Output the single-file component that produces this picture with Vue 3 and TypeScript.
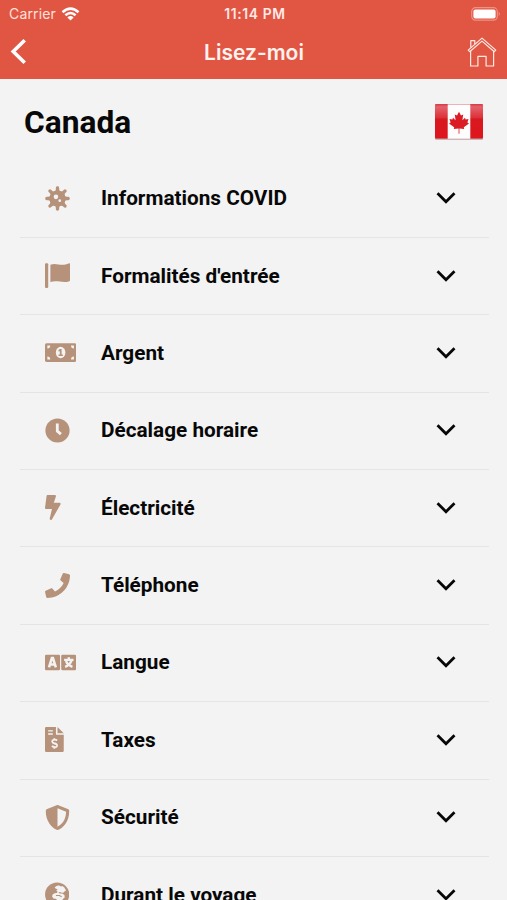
<script setup lang="ts">
interface Section {
  id: string
  label: string
  width: number
}

const sections: Section[] = [
  { id: 'covid', label: 'Informations COVID', width: 512 },
  { id: 'flag', label: "Formalités d'entrée", width: 512 },
  { id: 'money', label: 'Argent', width: 640 },
  { id: 'clock', label: 'Décalage horaire', width: 512 },
  { id: 'bolt', label: 'Électricité', width: 320 },
  { id: 'phone', label: 'Téléphone', width: 512 },
  { id: 'language', label: 'Langue', width: 640 },
  { id: 'invoice', label: 'Taxes', width: 384 },
  { id: 'shield', label: 'Sécurité', width: 512 },
  { id: 'globe', label: 'Durant le voyage', width: 496 },
]

const spikes: number[] = [0, 45, 90, 135, 180, 225, 270, 315]
</script>

<template>
  <div class="screen">
    <header class="top">
      <div class="status">
        <div class="carrier">
          <span>Carrier</span>
          <svg class="wifi" viewBox="0 0 18 14" fill="none" stroke="#fff" stroke-width="2.5">
            <path d="M1 5.2Q9-2 17 5.2" />
            <path d="M3.9 8.3Q9 3.8 14.1 8.3" />
            <path d="M9 13.6 5.9 10.4Q9 7.8 12.1 10.4Z" fill="#fff" stroke="none" />
          </svg>
        </div>
        <span class="time">11:14 PM</span>
        <svg class="battery" viewBox="0 0 30 14">
          <rect x=".7" y=".7" width="25.6" height="12.4" rx="3.8" fill="none" stroke="#ee9284" stroke-width="1.2" />
          <rect x="2.4" y="2.4" width="22.2" height="9" rx="2" fill="#fff" />
          <path d="M27.7 4.8Q30 6.9 27.7 9Z" fill="#ee9284" />
        </svg>
      </div>
      <nav class="nav">
        <svg class="back" viewBox="0 0 18 28" fill="none" stroke="#fff" stroke-width="3.6">
          <path d="M14.700 2.200 3.200 13.500 14.700 24.800" />
        </svg>
        <h1>Lisez-moi</h1>
        <svg class="home" viewBox="0 0 30 32" fill="none" stroke="#ffe9e5" stroke-width="1.2" stroke-linejoin="round">
          <path d="M1.200 14.100 15 2.100 28.800 14.100 27.300 15.700 15 5.100 2.700 15.700Z" />
          <path d="M3.600 15.100V30H10.900V20.400H19.100V30H26.600V15.100" />
          <path d="M3.800 11.400V4.700H7.800V8" />
        </svg>
      </nav>
    </header>

    <main>
      <div class="country">
        <h2>Canada</h2>
        <svg class="maple" viewBox="0 0 48 36">
          <defs>
            <linearGradient id="red" x1="0" y1="0" x2="0" y2="1">
              <stop offset="0" stop-color="#d9363e" />
              <stop offset=".08" stop-color="#e3626a" />
              <stop offset=".4" stop-color="#dd3038" />
              <stop offset=".43" stop-color="#d71920" />
              <stop offset="1" stop-color="#df151d" />
            </linearGradient>
          </defs>
          <rect y=".8" width="48" height="35" rx="1" fill="#b9a7a8" />
          <rect width="48" height="34.600" rx="1" fill="url(#red)" />
          <rect x="12.700" y=".4" width="22.600" height="34.400" fill="#fdfdfd" />
          <path d="M24 7.800 26 11.600 28.200 10.500 27.400 16.300 30 13.800 30.600 15.500 33.500 15.100 32.400 18.400 34 19.400 28.800 23.300 29.200 25.100 24.400 24.500V29.800H23.600V24.500L18.800 25.100 19.200 23.300 14 19.400 15.600 18.400 14.500 15.100 17.400 15.500 18 13.800 20.600 16.300 19.800 10.500 22 11.600Z" fill="#dc1c24" />
        </svg>
      </div>

      <ul>
        <li v-for="section in sections" :key="section.id">
          <div class="slot">
            <svg class="icon" :viewBox="`0 0 ${section.width} 512`" fill="#b6927a">
              <g v-if="section.id === 'covid'">
                <circle cx="256" cy="256" r="166" />
                <g v-for="angle in spikes" :key="angle" :transform="`rotate(${angle} 256 256)`">
                  <path d="M180 126Q222 104 222 65V34Q222 4 256 4T290 34V65Q290 104 332 126Z" />
                </g>
                <circle cx="224" cy="222" r="47" fill="#f3f3f3" />
                <circle cx="302" cy="300" r="28" fill="#f3f3f3" />
              </g>
              <g v-else-if="section.id === 'flag'">
                <rect x="0" y="6" width="66" height="506" rx="22" />
                <path d="M110 34C220-6 300 52 390 34Q440 24 483 8Q518-4 518 28V348Q518 366 500 372C370 420 260 350 110 388Z" />
              </g>
              <g v-else-if="section.id === 'money'">
                <rect y="64" width="640" height="384" rx="32" />
                <ellipse cx="320" cy="256" rx="98" ry="116" fill="#f3f3f3" />
                <path d="M48 112H108Q108 172 48 172ZM592 112H532Q532 172 592 172ZM48 400H108Q108 340 48 340ZM592 400H532Q532 340 592 340Z" fill="#f3f3f3" />
                <path d="M304 184H340V296H366V328H278V296H304V230L282 238 272 208Z" />
              </g>
              <g v-else-if="section.id === 'clock'">
                <circle cx="256" cy="256" r="248" />
                <path d="M252 112V270L326 330" fill="none" stroke="#f3f3f3" stroke-width="58" stroke-linejoin="round" />
              </g>
              <path v-else-if="section.id === 'bolt'" d="M296 160H180.600l42.600-129.800C227.200 15 215.700 0 200 0H56C44 0 33.800 8.900 32.200 20.800l-32 240C-1.700 275.200 9.500 288 24 288h118.700L96.600 482.500c-3.600 15.200 8 29.500 23.300 29.500 8.400 0 16.400-4.400 20.800-12l176-304c9.300-15.900-2.200-36-20.700-36z" />
              <path v-else-if="section.id === 'phone'" d="M493.400 24.600l-104-24c-11.300-2.600-22.900 3.300-27.500 13.900l-48 112c-4.200 9.800-1.400 21.300 6.900 28l60.600 49.600c-36 76.700-98.900 140.500-177.200 177.200l-49.600-60.600c-6.800-8.300-18.200-11.100-28-6.900l-112 48C3.900 366.500-2 378.100.6 389.400l24 104C27.100 504.200 36.700 512 48 512c256.100 0 464-207.500 464-464 0-11.200-7.700-20.900-18.600-23.400z" />
              <g v-else-if="section.id === 'language'">
                <rect y="96" width="308" height="320" rx="28" />
                <rect x="332" y="96" width="308" height="320" rx="28" />
                <g fill="none" stroke="#f3f3f3">
                  <path d="M82 354 141 165H163L222 354M110 296H194" stroke-width="52" />
                  <path d="M392 202H584M488 148V202M546 208Q512 310 412 344M430 226Q464 310 562 344" stroke-width="50" />
                </g>
              </g>
              <g v-else-if="section.id === 'invoice'">
                <path d="M24 0H224V136Q224 160 248 160H384V488Q384 512 360 512H24Q0 512 0 488V24Q0 0 24 0ZM256 0 384 128H256Z" />
                <path d="M64 78H160M64 143H160" stroke="#f3f3f3" stroke-width="28" />
                <path d="M248 278Q218 252 177 263C130 278 144 322 184 333C228 344 256 357 244 390C230 423 173 416 142 390M192 232V264M192 410V446" fill="none" stroke="#f3f3f3" stroke-width="38" />
              </g>
              <g v-else-if="section.id === 'shield'">
                <path d="M466.500 83.700l-192-80a48.150 48.150 0 0 0-36.900 0l-192 80C27.700 91.100 16 108.600 16 128c0 198.500 114.500 335.700 221.500 380.300 11.800 4.900 25.100 4.900 36.900 0C360.100 472.600 496 349.300 496 128c0-19.400-11.700-36.900-29.500-44.300z" />
                <path d="M256 66V446C360 390 430 284 432 139Z" fill="#f3f3f3" />
              </g>
              <g v-else>
                <circle cx="248" cy="256" r="248" />
                <path d="M196 116Q228 68 290 72L330 92 352 82 392 110 432 172 402 190 386 216 340 222 306 206 274 218 300 238 352 236 398 264 404 316 372 342 346 384 298 414 254 410 244 366 216 342 172 336 146 296 156 256 196 230 242 226 258 200 230 176 262 148 226 140Z" fill="#f3f3f3" />
                <path d="M224 276H296L340 300" fill="none" stroke="#b6927a" stroke-width="24" />
              </g>
            </svg>
          </div>
          <span class="label">{{ section.label }}</span>
          <svg class="chevron" viewBox="0 0 20 14" fill="none" stroke="#070707" stroke-width="2.8">
            <path d="M1.500 2.200 10 10.700 18.500 2.200" />
          </svg>
        </li>
      </ul>
    </main>
  </div>
</template>

<style>
body {
  margin: 0;
  overflow: hidden;
}
</style>

<style scoped>
.screen {
  box-sizing: border-box;
  width: 507px;
  height: 900px;
  overflow: hidden;
  background: #f3f3f3;
  color: #080808;
  font-family: Roboto, sans-serif;
}

.top {
  box-sizing: border-box;
  height: 79px;
  background: #e15643;
  color: #fff;
  font-family: Inter, sans-serif;
}

.status {
  display: grid;
  grid-template-columns: 1fr auto 1fr;
  align-items: center;
  height: 27px;
  padding: 0 6px 0 9px;
}

.carrier {
  display: flex;
  align-items: center;
  gap: 5px;
  color: #ffe1dc;
  font-size: 14px;
  letter-spacing: 0.15px;
}

.wifi {
  width: 19px;
  height: 14px;
}

.time {
  color: #ffe9e5;
  font-size: 13.8px;
  font-weight: 600;
  letter-spacing: 0.65px;
}

.battery {
  justify-self: end;
  width: 30px;
  height: 14px;
}

.nav {
  display: grid;
  grid-template-columns: 1fr auto 1fr;
  align-items: center;
  height: 50px;
  padding: 0 10px;
}

.back {
  width: 18px;
  height: 28px;
}

h1 {
  margin: 0 0 0 1px;
  color: #fff2ef;
  font-size: 21px;
  font-weight: 600;
}

.home {
  justify-self: end;
  width: 30px;
  height: 32px;
}

.country {
  display: flex;
  align-items: center;
  justify-content: space-between;
  height: 81.7px;
  padding: 0 24px;
}

h2 {
  margin: 5.5px 0 0;
  font-size: 31.7px;
  font-weight: 700;
}

.maple {
  width: 48px;
  height: 36px;
  margin-top: 4.600px;
}

ul {
  margin: 0 18px 0 20px;
  padding: 0;
  list-style: none;
}

li {
  display: flex;
  align-items: center;
  box-sizing: border-box;
  height: 77.36px;
  padding: 0 33px 1.2px 25px;
  border-bottom: 1px solid #e4e4e4;
}

.slot {
  display: flex;
  width: 56px;
}

.icon {
  display: block;
  height: 25px;
}

.label {
  flex: 1;
  font-size: 20.75px;
  font-weight: 700;
  white-space: nowrap;
}

.chevron {
  width: 20px;
  height: 14px;
}
</style>
